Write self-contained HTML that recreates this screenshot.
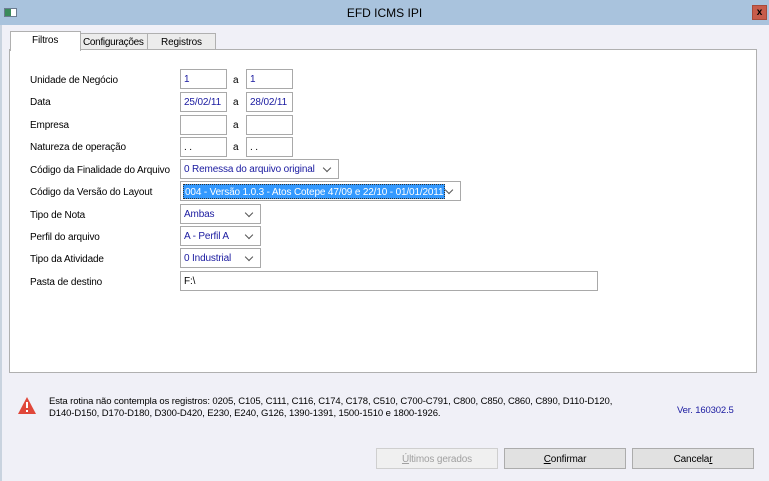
<!DOCTYPE html>
<html><head><meta charset="utf-8"><style>
*{box-sizing:border-box;margin:0;padding:0}
body{width:769px;height:481px;background:#f0f0f7;font-family:"Liberation Sans",sans-serif;font-size:10px;color:#000;position:relative;overflow:hidden}
.a{position:absolute}
.t{position:absolute;font-size:10px;letter-spacing:-0.15px;white-space:nowrap}
.in{position:absolute;background:#fff;border:1px solid #a9a9a9;color:#1a1aa0;font-size:10px;letter-spacing:-0.15px;padding:4px 0 0 3px;height:20px;white-space:nowrap;overflow:hidden}
.sel{position:absolute;background:#fff;border:1px solid #a9a9a9;color:#1a1aa0;font-size:10px;letter-spacing:-0.15px;padding:4px 0 0 3px;height:20px;white-space:nowrap}
.sel:after{content:"";position:absolute;right:8px;top:5px;width:5px;height:5px;border-right:1.3px solid #555;border-bottom:1.3px solid #555;transform:rotate(45deg)}
.btn{position:absolute;top:448px;height:21px;width:122px;border:1px solid #acacac;background:#e1e1e1;text-align:center;font-size:10px;letter-spacing:-0.15px;padding-top:5px}
</style></head><body>
<div class="a" style="left:0;top:0;width:769px;height:25px;background:#a9c3dd"></div>
<div class="a" style="left:4px;top:8px;width:13px;height:9px;background:#fff;border:1px solid #6b7c90"><div style="width:6px;height:7px;background:#3a8a5a"></div></div>
<div class="t" style="left:0;width:769px;text-align:center;top:6px;font-size:12px;letter-spacing:0">EFD ICMS IPI</div>
<div class="a" style="left:752px;top:5px;width:15px;height:15px;background:#c75c4b;border:1px solid #a84a3a;color:#000;font-size:10px;font-weight:bold;text-align:center;line-height:13px">x</div>
<div class="a" style="left:0;top:25px;width:2px;height:456px;background:#c9d3df"></div>
<div class="a" style="left:9px;top:49px;width:748px;height:324px;background:#fff;border:1px solid #b0b0b0"></div>
<div class="a" style="left:80px;top:33px;width:68px;height:17px;background:#ececec;border:1px solid #b0b0b0"></div>
<div class="t" style="left:83px;top:37px;letter-spacing:-0.3px">Configurações</div>
<div class="a" style="left:147px;top:33px;width:69px;height:17px;background:#ececec;border:1px solid #b0b0b0"></div>
<div class="t" style="left:161px;top:37px">Registros</div>
<div class="a" style="left:10px;top:31px;width:71px;height:20px;background:#fff;border:1px solid #b0b0b0;border-bottom:none"></div>
<div class="t" style="left:32px;top:35px">Filtros</div>

<div class="t" style="left:30px;top:75px">Unidade de Negócio</div>
<div class="in" style="left:180px;top:69px;width:47px">1</div><div class="t" style="left:233px;top:75px">a</div><div class="in" style="left:246px;top:69px;width:47px">1</div>
<div class="t" style="left:30px;top:97px">Data</div>
<div class="in" style="left:180px;top:92px;width:47px">25/02/11</div><div class="t" style="left:233px;top:97px">a</div><div class="in" style="left:246px;top:92px;width:47px">28/02/11</div>
<div class="t" style="left:30px;top:120px">Empresa</div>
<div class="in" style="left:180px;top:115px;width:47px"></div><div class="t" style="left:233px;top:120px">a</div><div class="in" style="left:246px;top:115px;width:47px"></div>
<div class="t" style="left:30px;top:142px">Natureza de operação</div>
<div class="in" style="left:180px;top:137px;width:47px;color:#000"> . .</div><div class="t" style="left:233px;top:142px">a</div><div class="in" style="left:246px;top:137px;width:47px;color:#000"> . .</div>
<div class="t" style="left:30px;top:165px">Código da Finalidade do Arquivo</div>
<div class="sel" style="left:180px;top:159px;width:159px">0 Remessa do arquivo original</div>
<div class="t" style="left:30px;top:187px">Código da Versão do Layout</div>
<div class="sel" style="left:180px;top:181px;width:281px;padding:2px"><span style="display:inline-block;background:#3399ff;color:#fff;padding:2px 1px;border:1px dotted #333;width:262px;height:15px">004 - Versão 1.0.3 - Atos Cotepe 47/09 e 22/10 - 01/01/2011</span></div>
<div class="t" style="left:30px;top:210px">Tipo de Nota</div>
<div class="sel" style="left:180px;top:204px;width:81px">Ambas</div>
<div class="t" style="left:30px;top:232px">Perfil do arquivo</div>
<div class="sel" style="left:180px;top:226px;width:81px">A - Perfil A</div>
<div class="t" style="left:30px;top:254px">Tipo da Atividade</div>
<div class="sel" style="left:180px;top:248px;width:81px">0 Industrial</div>
<div class="t" style="left:30px;top:277px">Pasta de destino</div>
<div class="in" style="left:180px;top:271px;width:418px;color:#000">F:\</div>

<svg class="a" style="left:17px;top:396px" width="20" height="19" viewBox="0 0 20 19"><path d="M10 1 L19 18 L1 18 Z" fill="#e0473a"/><rect x="9" y="6" width="2" height="6" fill="#fff"/><rect x="9" y="14" width="2" height="2" fill="#fff"/></svg>
<div class="t" style="left:49px;top:396px;font-size:9.5px;line-height:12px;letter-spacing:-0.1px">Esta rotina não contempla os registros: 0205, C105, C111, C116, C174, C178, C510, C700-C791, C800, C850, C860, C890, D110-D120,<br>D140-D150, D170-D180, D300-D420, E230, E240, G126, 1390-1391, 1500-1510 e 1800-1926.</div>
<div class="t" style="left:677px;top:405px;color:#1a1aa0;font-size:9.5px">Ver. 160302.5</div>

<div class="btn" style="left:376px;color:#a0a0a0;background:#f0f0f0;border-color:#cfcfcf"><u>Ú</u>ltimos gerados</div>
<div class="btn" style="left:504px"><u>C</u>onfirmar</div>
<div class="btn" style="left:632px">Cancela<u>r</u></div>
</body></html>
